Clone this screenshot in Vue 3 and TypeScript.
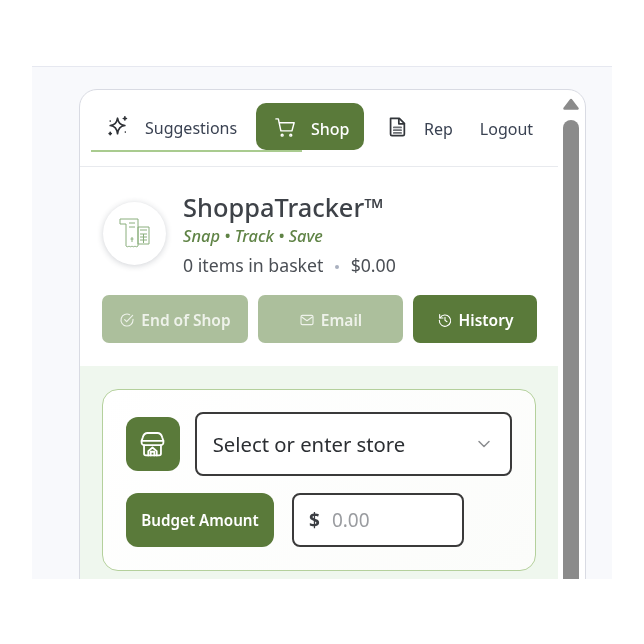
<script setup lang="ts">
const shopName = "ShoppaTracker™";
const itemCount = 0;
const total = "$0.00";
</script>

<template>
  <div class="stage">
    <div class="card">
      <div class="content">
        <nav class="nav">
          <a class="tab tab-suggest">
            <svg class="nav-icon" viewBox="0 0 24 24" fill="none" stroke="#2f3237" stroke-width="1.800" stroke-linejoin="round" stroke-linecap="round">
              <path d="M11.500 3.500c1 5.200 2.800 7 8 8-5.200 1-7 2.800-8 9-1-6.200-2.800-8-8-9 5.200-1 7-2.800 8-8z" />
              <path d="M19.500 2v3.500M17.800 3.800h3.400M3.500 19v2.500M2.300 20.300h2.400M3.500 6.500v.1M20 18.500v.1" />
            </svg>
            <span>Suggestions</span>
          </a>
          <a class="tab tab-shop">
            <svg class="cart" viewBox="0 0 24 24" fill="none" stroke="#fff" stroke-width="1.500" stroke-linecap="round" stroke-linejoin="round">
              <path d="M2 3h2.500l2.700 12.500h11.500L21 7H5.500" />
              <circle cx="8.500" cy="20" r="1" />
              <circle cx="17.500" cy="20" r="1" />
            </svg>
            <span>Shop</span>
          </a>
          <a class="tab tab-rep">
            <svg class="nav-icon" viewBox="0 0 24 24" fill="none" stroke="#33363b" stroke-width="1.900" stroke-linejoin="round" stroke-linecap="round">
              <path d="M5 2.500h9.500L20 8v12a1.500 1.500 0 0 1-1.500 1.500h-12A1.500 1.500 0 0 1 5 20z" />
              <path d="M14 3v5.500h6" />
              <path d="M8.500 12.500h8M8.500 15.500h8M8.500 18.500h8" stroke="#6d7075" />
            </svg>
            <span>Rep</span>
          </a>
          <a class="tab tab-logout"><span>Logout</span></a>
        </nav>

        <header class="head">
          <div class="brand">
            <div class="logo">
              <svg viewBox="0 0 36 36" fill="none" stroke="#8aae7c" stroke-width="1" stroke-linejoin="round">
                <path d="M3 3h18v27c-1 1-2 1-3 0-1 1-2 1-3 0-1 1-2 1-3 0-1 1-2 1-3 0V8H3z" />
                <path d="M12 7h6M12 11h6M15 21v5M13.500 23h3" />
                <rect x="21" y="11" width="11" height="17" />
                <path d="M23 14h7M23 18h7M23 21h7M23 24h7M26.500 18v9" />
              </svg>
            </div>
            <div class="brand-text">
              <h1>{{ shopName }}</h1>
              <p class="tag">Snap • Track • Save</p>
              <p class="count">
                {{ itemCount }} items in basket <i class="dot"></i> {{ total }}
              </p>
            </div>
          </div>
          <div class="actions">
            <button class="act act-end faded">
              <svg viewBox="0 0 24 24" fill="none" stroke="currentColor" stroke-width="1.700" stroke-linecap="round" stroke-linejoin="round">
                <path d="M21 11v1a9 9 0 1 1-5-8" />
                <path d="M8.500 11.500l3 3L20.500 5" />
              </svg>
              End of Shop
            </button>
            <button class="act act-email faded">
              <svg viewBox="0 0 24 24" fill="none" stroke="currentColor" stroke-width="1.700" stroke-linejoin="round">
                <rect x="3" y="5" width="18" height="14" rx="2" />
                <path d="M3.500 7l8.500 6 8.500-6" />
              </svg>
              Email
            </button>
            <button class="act act-history">
              <svg viewBox="0 0 24 24" fill="none" stroke="currentColor" stroke-width="1.700" stroke-linecap="round" stroke-linejoin="round">
                <path d="M4 4v5h5" />
                <path d="M4.500 9A8.500 8.500 0 1 1 3.500 12.500" />
                <path d="M12 8v4.500l3 2" />
              </svg>
              History
            </button>
          </div>
        </header>

        <section class="body">
          <div class="panel">
            <div class="row row-store">
              <div class="store-icon">
                <svg viewBox="0 0 24 24" fill="none" stroke="#fff" stroke-width="1.500" stroke-linejoin="round" stroke-linecap="round">
                  <path d="M8 2.500h8c2 0 3.500 1.500 4 3.500l1 3H3l1-3c.5-2 2-3.500 4-3.500z" />
                  <path d="M3 9v1.500C3 11.500 4 12.500 5 12.500h14c1 0 2-1 2-2V9" />
                  <path d="M5 12.500v7A1.500 1.500 0 0 0 6.500 21h11a1.500 1.500 0 0 0 1.500-1.500v-7" />
                  <path d="M8.500 21v-3.500L12 14.500l3.500 3V21M10.500 21v-3h3v3" />
                </svg>
              </div>
              <div class="select">
                <span>Select or enter store</span>
                <svg viewBox="0 0 16 16" fill="none" stroke="#8b8d90" stroke-width="1.500" stroke-linecap="round" stroke-linejoin="round">
                  <path d="M3 5.500l5 5 5-5" />
                </svg>
              </div>
            </div>
            <div class="row row-budget">
              <button class="budget-btn">Budget Amount</button>
              <div class="amount">
                <b>$</b>
                <span>0.00</span>
              </div>
            </div>
          </div>
        </section>
      </div>

      <div class="scrollbar">
        <svg class="arrow" viewBox="0 0 16 12">
          <path d="M8 2L14.500 10.500H1.500z" fill="#8b8b8b" stroke="#8b8b8b" stroke-width="2.500" stroke-linejoin="round" />
        </svg>
        <span class="thumb"></span>
      </div>
    </div>
  </div>
</template>

<style scoped>
.stage {
  box-sizing: border-box;
  width: 580px;
  height: 513px;
  margin: 66px 0 0 32px;
  padding: 22px 0 0 47px;
  background: #f8f9fc;
  border-top: 1px solid #e6e8f0;
  overflow: hidden;
  font-family: "Noto Sans", "Open Sans", sans-serif;
  filter: blur(0.45px);
}

.card {
  display: flex;
  box-sizing: border-box;
  width: 507px;
  height: 560px;
  background: #fff;
  border: 1.5px solid #d9dbe3;
  border-radius: 18px;
  overflow: hidden;
}

.content {
  width: 478px;
  flex-shrink: 0;
}

.nav {
  display: flex;
  align-items: center;
  box-sizing: border-box;
  height: 77px;
  padding: 0 0 4px 11px;
  border-bottom: 1.5px solid #e8eaee;
  color: #3a4252;
  font-size: 16px;
}

.tab {
  display: flex;
  align-items: center;
  white-space: nowrap;
}

.tab span {
  padding-top: 5px;
}

.nav-icon {
  width: 22px;
  height: 22px;
  margin-top: 2px;
}

.tab-suggest {
  box-sizing: border-box;
  width: 211px;
  height: 52px;
  padding-left: 16px;
  gap: 16px;
  border-bottom: 2px solid #a9cb8f;
}

.tab-shop {
  position: relative;
  box-sizing: border-box;
  width: 108px;
  height: 47px;
  margin-left: -46px;
  padding-left: 18px;
  gap: 14px;
  background: #5a7a3a;
  border-radius: 10px;
  color: #fff;
  font-weight: 500;
}

.cart {
  width: 23px;
  height: 23px;
  margin-top: 2px;
}

.tab-rep {
  margin-left: 22px;
  gap: 16px;
}

.tab-logout {
  margin-left: 27px;
}

.head {
  padding: 35px 21px 23px 22px;
}

.brand {
  display: flex;
  gap: 17px;
}

.logo {
  display: flex;
  align-items: center;
  justify-content: center;
  width: 63px;
  height: 63px;
  margin-left: 1px;
  background: #fff;
  border-radius: 50%;
  box-shadow: 0 1px 6px rgba(40, 50, 70, 0.22);
}

.logo svg {
  width: 36px;
  height: 36px;
}

.brand-text {
  margin-top: -11px;
}

h1 {
  margin: 0;
  color: #3e4248;
  font-size: 25.4px;
  font-weight: 500;
  line-height: 32px;
}

.tag {
  margin: 3px 0 0;
  color: #5f8345;
  font-size: 16.400px;
  font-style: italic;
  font-weight: 500;
  line-height: 20px;
}

.count {
  margin: 8px 0 0;
  color: #4b4f55;
  font-size: 17.700px;
  line-height: 22px;
  white-space: nowrap;
}

.dot {
  display: inline-block;
  width: 4px;
  height: 4px;
  margin: 0 7px;
  vertical-align: 3px;
  background: #a9b0bf;
  border-radius: 50%;
}

.actions {
  display: flex;
  gap: 10px;
  margin-top: 19px;
}

.act {
  display: flex;
  align-items: center;
  justify-content: center;
  gap: 6px;
  height: 48px;
  padding: 2px 0 0;
  background: #5a7a3a;
  border: 0;
  border-radius: 7px;
  color: #fff;
  font-family: inherit;
  font-size: 15.500px;
  font-weight: 600;
}

.act svg {
  width: 16px;
  height: 16px;
}

.faded {
  background: #acbf9c;
  color: #eef2ea;
}

.act-end {
  width: 146px;
}

.act-email {
  width: 145px;
}

.act-history {
  width: 124px;
}

.body {
  height: 300px;
  padding: 23px 22px;
  background: #eff7ee;
}

.panel {
  box-sizing: border-box;
  width: 434px;
  height: 182px;
  padding: 22px 23px 0;
  background: linear-gradient(135deg, #fff, #fbfcfa);
  border: 1.5px solid #b4d09c;
  border-radius: 16px;
}

.row {
  display: flex;
  align-items: center;
}

.row-store {
  gap: 15px;
}

.store-icon {
  display: flex;
  align-items: center;
  justify-content: center;
  width: 54px;
  height: 54px;
  background: #5a7a3a;
  border-radius: 12px;
}

.store-icon svg {
  width: 29px;
  height: 29px;
}

.select {
  display: flex;
  align-items: center;
  justify-content: space-between;
  box-sizing: border-box;
  width: 319px;
  height: 64px;
  padding: 0 18px 0 16px;
  background: #fff;
  border: 2px solid #3a3a3a;
  border-radius: 8px;
  color: #2c2f33;
  font-size: 20.300px;
}

.select svg {
  width: 16px;
  height: 16px;
}

.row-budget {
  gap: 18px;
  margin-top: 17px;
}

.budget-btn {
  width: 148px;
  height: 54px;
  padding: 0;
  background: #5a7a3a;
  border: 0;
  border-radius: 12px;
  color: #fff;
  font-family: inherit;
  font-size: 15.200px;
  font-weight: 600;
}

.amount {
  display: flex;
  align-items: center;
  gap: 12px;
  box-sizing: border-box;
  width: 172px;
  height: 54px;
  padding-left: 15px;
  background: #fff;
  border: 2px solid #3a3a3a;
  border-radius: 8px;
  font-size: 19px;
}

.amount b {
  color: #3a3d42;
}

.amount span {
  color: #9a9ca0;
}

.scrollbar {
  display: flex;
  flex-direction: column;
  align-items: center;
  width: 16px;
  margin-left: 5px;
  padding-top: 8px;
}

.arrow {
  width: 16px;
  height: 12px;
  flex-shrink: 0;
}

.thumb {
  width: 16px;
  flex: 1;
  margin-top: 10px;
  background: #8b8b8b;
  border-radius: 8px 8px 0 0;
}
</style>

<style>
html,
body {
  background: #fff;
}
</style>
